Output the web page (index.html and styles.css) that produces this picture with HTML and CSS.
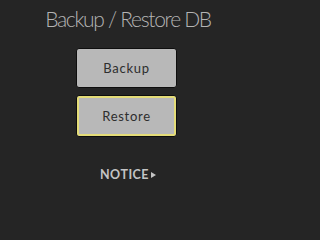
FILE: index.html
```html
<!DOCTYPE html>
<html>
<head>
<meta charset="utf-8">
<link rel="stylesheet" href="styles.css">
</head>
<body>
<div class="page">
  <h1 class="title">Backup / Restore DB</h1>
  <div class="buttons">
    <button class="btn">Backup</button>
    <button class="btn btn-focus">Restore</button>
  </div>
  <div class="notice">NOTICE<span class="arrow"></span></div>
</div>
</body>
</html>
```

FILE: styles.css
```css
html, body {
  margin: 0;
  padding: 0;
  background: #252525;
}
.page {
  width: 253px;
  height: 228px;
  display: flex;
  flex-direction: column;
  align-items: center;
  font-family: "Lato", "Liberation Sans", sans-serif;
}
.title {
  margin: 6px 0 0 3px;
  font-size: 21px;
  line-height: 25px;
  font-weight: 300;
  letter-spacing: -1.3px;
  color: #b4b4b4;
}
.buttons {
  display: flex;
  flex-direction: column;
  gap: 7px;
  margin-top: 17px;
}
.btn {
  box-sizing: border-box;
  width: 101px;
  height: 40px;
  background: #b8b8b8;
  border: 1px solid #0e0e0e;
  border-radius: 3px;
  font-family: "Lato", "Liberation Sans", sans-serif;
  font-size: 13px;
  letter-spacing: 0.7px;
  color: #2e2e2e;
  padding: 0;
}
.btn-focus {
  height: 42px;
  box-shadow: inset 0 0 0 2px #e4dc78;
}
.notice {
  margin: 30px 0 0 3px;
  display: flex;
  align-items: center;
  font-size: 12.5px;
  font-weight: 700;
  letter-spacing: 0.5px;
  color: #c4c4c4;
}
.arrow {
  width: 0;
  height: 0;
  margin-left: 2px;
  border-top: 3.5px solid transparent;
  border-bottom: 3.5px solid transparent;
  border-left: 5px solid #c4c4c4;
}
```
